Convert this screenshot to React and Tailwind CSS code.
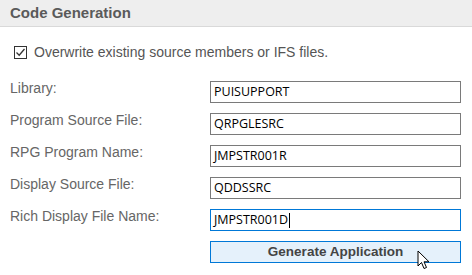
import React from 'react';

const fields = [
  { label: 'Library:', value: 'PUISUPPORT' },
  { label: 'Program Source File:', value: 'QRPGLESRC' },
  { label: 'RPG Program Name:', value: 'JMPSTR001R' },
  { label: 'Display Source File:', value: 'QDDSSRC' },
  { label: 'Rich Display File Name:', value: 'JMPSTR001D', focused: true },
];

export default function App() {
  return (
    <div className="w-[472px] h-[275px] bg-white overflow-hidden font-['Liberation_Sans',Arial,sans-serif]">
      <div className="h-[27px] bg-[#eeeeee] border-b border-[#d9d9d9] pl-[10px] flex items-center">
        <span className="text-[15px] font-bold text-[#5a5a5a]">Code Generation</span>
      </div>

      <div className="flex items-center mt-[18px] pl-[14px] h-[14px]">
        <svg width="13" height="13" viewBox="0 0 13 13">
          <rect x="0.5" y="0.5" width="12" height="12" fill="white" stroke="#333" />
          <path d="M2.5 6.5 L5.2 9.2 L10.5 3" fill="none" stroke="#333" strokeWidth="1.3" />
        </svg>
        <span className="ml-[7px] text-[14px] text-[#555555]">Overwrite existing source members or IFS files.</span>
      </div>

      <div className="mt-[22px] flex flex-col gap-[10px]">
        {fields.map((f) => (
          <div key={f.label} className="flex items-start h-[22px]">
            <span className="w-[210px] pl-[10px] text-[14px] text-[#666666] leading-[16px] -mt-[1px]">{f.label}</span>
            <div
              className={`w-[251px] h-[22px] border flex items-center pl-[3px] text-[12.5px] text-black font-['Open_Sans',sans-serif] ${
                f.focused ? 'border-[#0078d7]' : 'border-[#7a7a7a]'
              }`}
            >
              {f.value}
              {f.focused && <span className="ml-[1px] w-px h-[15px] bg-black" />}
            </div>
          </div>
        ))}
        <div className="flex h-[22px]">
          <div className="w-[210px]" />
          <div className="relative w-[251px] h-[22px] border border-[#0078d7] bg-[#e5f1fb] flex items-center justify-center text-[13.5px] font-bold text-[#444444]">
            Generate Application
            <svg className="absolute left-[206px] top-[8px]" width="14" height="20" viewBox="0 0 14 20">
              <path d="M1 1 L1 16 L4.5 12.5 L7 18.5 L9.5 17.5 L7 11.8 L12 11.8 Z" fill="white" stroke="black" strokeWidth="1" strokeLinejoin="round" />
            </svg>
          </div>
        </div>
      </div>
    </div>
  );
}
